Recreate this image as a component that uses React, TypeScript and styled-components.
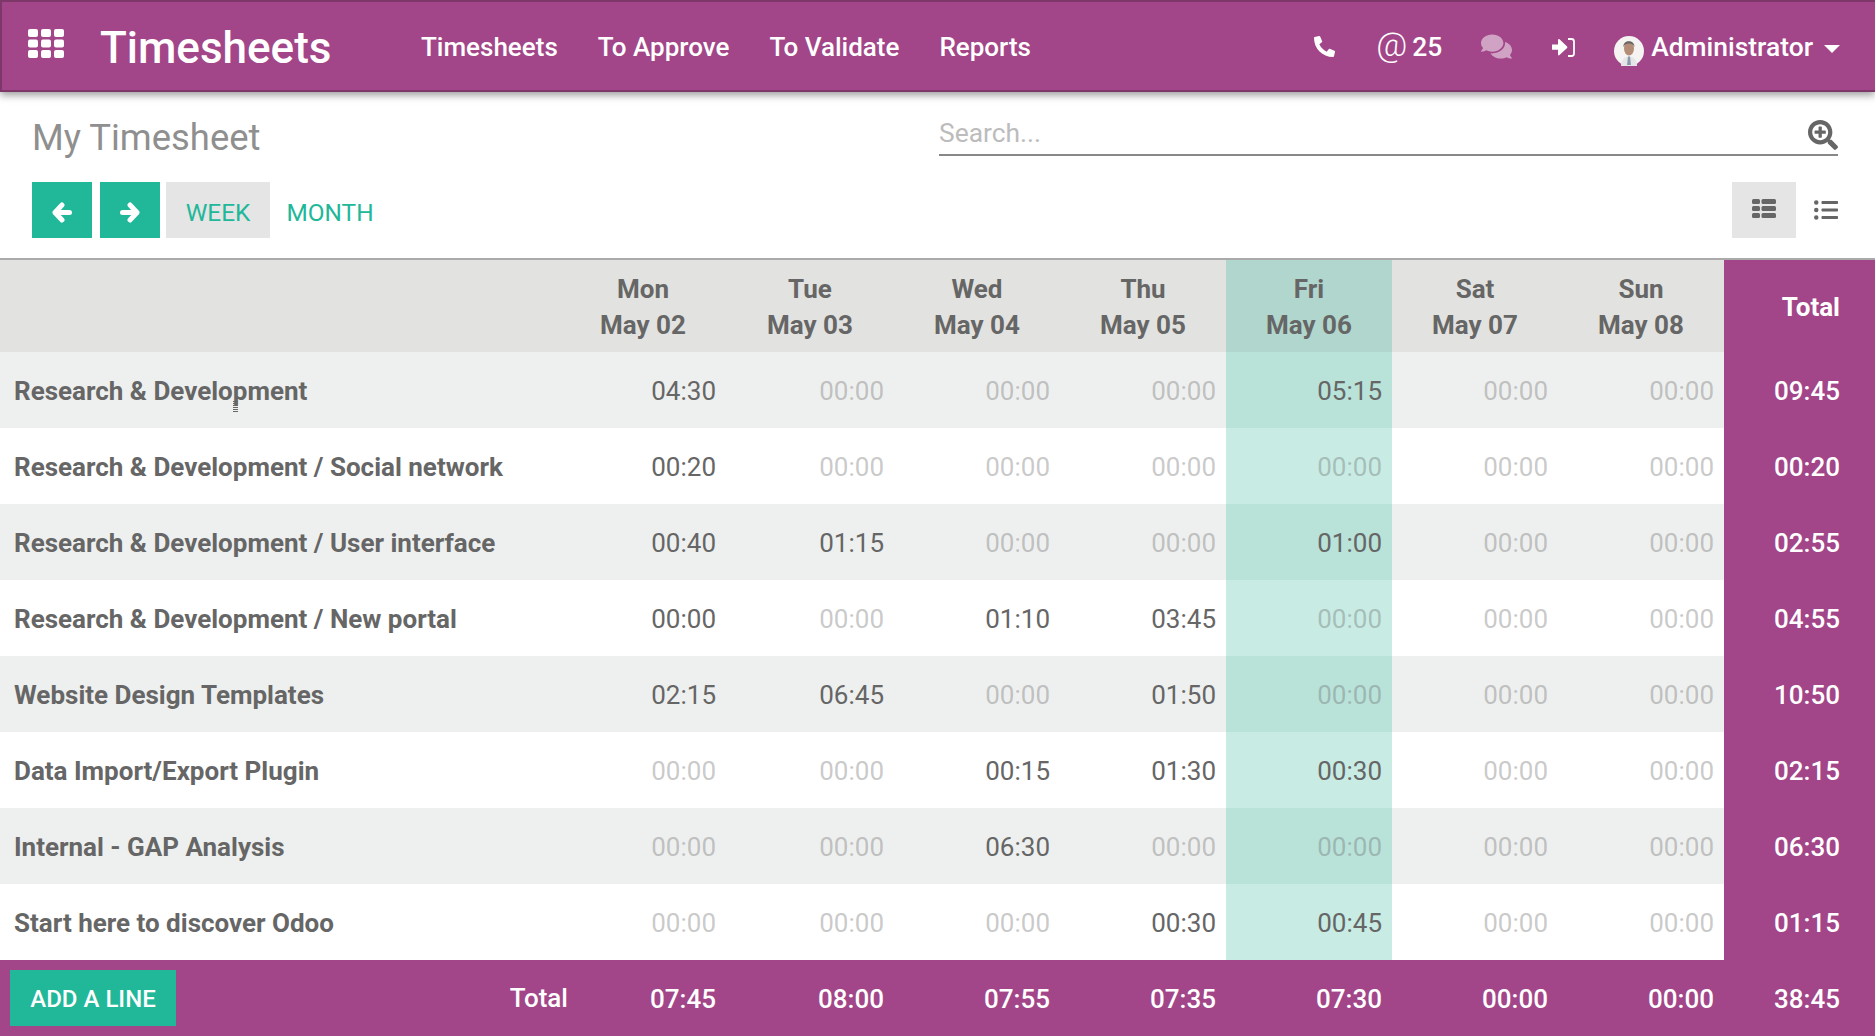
import styled, { createGlobalStyle } from 'styled-components';
import { FaComments, FaListUl, FaPhoneAlt, FaSearchPlus } from 'react-icons/fa';

const GlobalStyle = createGlobalStyle`
  html, body {
    margin: 0;
    padding: 0;
    background: #fff;
    font-family: Roboto, "Liberation Sans", sans-serif;
    overflow: hidden;
  }
`;

const Page = styled.div`
  width: 1875px;
  height: 1036px;
  display: flex;
  flex-direction: column;
  overflow: hidden;
`;

const Navbar = styled.nav`
  height: 92px;
  box-sizing: border-box;
  flex: none;
  display: flex;
  align-items: center;
  padding: 3px 35px 0 26px;
  background: #a24689;
  border: 2px solid #7e3769;
  border-right: none;
  color: #fff;
  box-shadow: 0 3px 8px rgba(0, 0, 0, 0.4);
  position: relative;
  z-index: 1;
`;

const AppsIcon = styled.svg`
  width: 36px;
  height: 29px;
  margin-bottom: 8px;
  fill: #fff;
`;

const Brand = styled.div`
  font-size: 44px;
  font-weight: 500;
  margin-left: 36px;
  width: 321px;
`;

const NavItem = styled.a`
  font-size: 26px;
  font-weight: 500;
  margin: 0 40px 2px 0;
`;

const Spacer = styled.div`
  flex: 1;
`;

const Systray = styled.div`
  display: flex;
  align-items: center;
  font-size: 26.4px;
  font-weight: 500;
  margin-bottom: 2px;
`;

const TrayItem = styled.div<{ $gap: number; $dim?: boolean }>`
  display: flex;
  align-items: center;
  margin-right: ${(p) => p.$gap}px;
  opacity: ${(p) => (p.$dim ? 0.5 : 1)};
`;

const AtSign = styled.span`
  font-size: 34px;
  line-height: 40px;
  font-weight: 300;
  margin: -5px 5px 0 0;
`;

const SignInIcon = styled.svg`
  width: 23px;
  height: 19px;
  margin-top: 2px;
`;

const Avatar = styled.svg`
  width: 30px;
  height: 30px;
  margin: 8px 7px 0 0;
`;

const Caret = styled.span`
  width: 0;
  height: 0;
  margin-left: 11px;
  margin-top: 5px;
  border-left: 8px solid transparent;
  border-right: 8px solid transparent;
  border-top: 8px solid #fff;
`;

const ControlPanel = styled.div`
  height: 166px;
  box-sizing: border-box;
  flex: none;
  padding: 0 37px 0 32px;
  display: flex;
  flex-direction: column;
`;

const PanelTop = styled.div`
  height: 90px;
  display: flex;
  justify-content: space-between;
`;

const Title = styled.h1`
  margin: 24px 0 0;
  font-size: 36.4px;
  font-weight: 400;
  color: #8f8f8f;
`;

const SearchBox = styled.div`
  width: 899px;
  height: 64px;
  box-sizing: border-box;
  border-bottom: 2px solid #888;
  display: flex;
  align-items: flex-end;
  justify-content: space-between;
  padding-bottom: 4px;
`;

const Placeholder = styled.span`
  font-size: 26.4px;
  color: #bcbcbc;
  margin-bottom: 2px;
`;

const SearchIcon = styled(FaSearchPlus)`
  width: 30px;
  height: 30px;
  color: #666;
`;

const PanelBottom = styled.div`
  display: flex;
  align-items: center;
  height: 56px;
`;

const ArrowButton = styled.button`
  width: 60px;
  height: 56px;
  border: none;
  padding: 4px 0 0;
  background: #21b799;
  display: flex;
  align-items: center;
  justify-content: center;
  & + & {
    margin-left: 8px;
  }
`;

const ArrowIcon = styled.svg`
  width: 20px;
  height: 21px;
  fill: none;
  stroke: #fff;
  stroke-width: 5;
  stroke-linecap: round;
  stroke-linejoin: round;
`;

const ModeButton = styled.button<{ $active?: boolean }>`
  width: ${(p) => (p.$active ? '104px' : '120px')};
  height: 56px;
  border: none;
  font-family: inherit;
  font-size: 24.4px;
  padding: 4px 0 0;
  color: #21b799;
  background: ${(p) => (p.$active ? '#e5e5e5' : 'transparent')};
  margin-left: ${(p) => (p.$active ? '6px' : '0')};
`;

const ViewButtons = styled.div`
  margin-left: auto;
  display: flex;
  align-items: center;
`;

const ViewButton = styled.button<{ $active?: boolean }>`
  height: 56px;
  width: ${(p) => (p.$active ? '64px' : '24px')};
  margin-left: ${(p) => (p.$active ? '0' : '18px')};
  border: none;
  padding: 0 0 ${(p) => (p.$active ? '3px' : '0')};
  color: #666;
  font-size: 24px;
  background: ${(p) => (p.$active ? '#e5e5e5' : 'transparent')};
  display: flex;
  align-items: center;
  justify-content: center;
`;

const ThListIcon = styled.svg`
  width: 24px;
  height: 19px;
  fill: #666;
`;

const Sheet = styled.table`
  width: 1875px;
  table-layout: fixed;
  border-collapse: separate;
  border-spacing: 0;
  border-top: 2px solid #aaa;
  font-size: 26px;
  color: #666;
`;

const TableCol = styled.col<{ $width: number }>`
  width: ${(p) => p.$width}px;
`;

const HeadRow = styled.tr`
  height: 92px;
  background: #e2e2e0;
`;

const HeadCell = styled.th<{ $today?: boolean }>`
  padding: 1px 0 0;
  font-weight: 700;
  line-height: 36px;
  text-align: center;
  background: ${(p) => (p.$today ? '#b0d6cd' : 'transparent')};
`;

const TotalHead = styled.th`
  padding: 1px 35px 0 0;
  text-align: right;
  font-weight: 700;
  color: #fff;
  background: #a24689;
`;

const Row = styled.tr`
  height: 76px;
  &:nth-child(odd) {
    background: #eef0ef;
  }
  &:nth-child(even) {
    background: #fff;
  }
  &:nth-child(odd) td.today {
    background: #b9e2d9;
  }
  &:nth-child(even) td.today {
    background: #c8ece4;
  }
`;

const NameCell = styled.td`
  padding: 1px 0 0 14px;
  font-weight: 700;
  white-space: nowrap;
`;

const NameText = styled.span`
  position: relative;
`;

const MouseCursor = styled.span`
  position: absolute;
  left: 219px;
  top: 25px;
  width: 5px;
  height: 12px;
  background: repeating-linear-gradient(#666 0 1px, transparent 1px 2px);
`;

const TimeCell = styled.td<{ $empty: boolean }>`
  padding: 1px 10px 0 0;
  text-align: right;
  color: ${(p) => (p.$empty ? 'rgba(102, 102, 102, 0.36)' : '#666')};
`;

const TotalCell = styled.td`
  padding: 1px 35px 0 0;
  text-align: right;
  font-weight: 500;
  color: #fff;
  background: #a24689;
`;

const FootRow = styled.tr`
  height: 76px;
  background: #a24689;
  color: #fff;
`;

const FootLabel = styled.td`
  padding: 0 0 0 10px;
`;

const FootLabelInner = styled.div`
  display: flex;
  align-items: center;
  justify-content: space-between;
  margin-right: -8px;
  font-weight: 500;
`;

const AddButton = styled.button`
  width: 166px;
  height: 56px;
  border: none;
  padding: 2px 0 0;
  background: #21b799;
  color: #fff;
  font-family: inherit;
  font-size: 24px;
  font-weight: 500;
`;

const FootCell = styled.td`
  padding: 2px 10px 0 0;
  text-align: right;
  font-weight: 500;
`;

const FootTotal = styled(FootCell)`
  padding-right: 35px;
`;

const days = [
  ['Mon', 'May 02'],
  ['Tue', 'May 03'],
  ['Wed', 'May 04'],
  ['Thu', 'May 05'],
  ['Fri', 'May 06'],
  ['Sat', 'May 07'],
  ['Sun', 'May 08'],
];

// "--" is a day without a line: it shows as a dimmed 00:00
const rows = [
  { name: 'Research & Development', hours: ['04:30', '--', '--', '--', '05:15', '--', '--'], total: '09:45' },
  { name: 'Research & Development / Social network', hours: ['00:20', '--', '--', '--', '--', '--', '--'], total: '00:20' },
  { name: 'Research & Development / User interface', hours: ['00:40', '01:15', '--', '--', '01:00', '--', '--'], total: '02:55' },
  { name: 'Research & Development / New portal', hours: ['00:00', '--', '01:10', '03:45', '--', '--', '--'], total: '04:55' },
  { name: 'Website Design Templates', hours: ['02:15', '06:45', '--', '01:50', '--', '--', '--'], total: '10:50' },
  { name: 'Data Import/Export Plugin', hours: ['--', '--', '00:15', '01:30', '00:30', '--', '--'], total: '02:15' },
  { name: 'Internal - GAP Analysis', hours: ['--', '--', '06:30', '--', '--', '--', '--'], total: '06:30' },
  { name: 'Start here to discover Odoo', hours: ['--', '--', '--', '00:30', '00:45', '--', '--'], total: '01:15' },
];

const footTotals = ['07:45', '08:00', '07:55', '07:35', '07:30', '00:00', '00:00'];

const colWidths = [560, 166, 168, 166, 166, 166, 166, 166, 151];

const TODAY = 4;

export default function App() {
  return (
    <Page>
      <GlobalStyle />
      <Navbar>
        <AppsIcon viewBox="0 0 36 29">
          {[0, 1, 2].map((r) =>
            [0, 1, 2].map((c) => (
              <rect key={`${r}-${c}`} x={c * 13} y={r * 10.5} width="10" height="8" rx="2" />
            )),
          )}
        </AppsIcon>
        <Brand>Timesheets</Brand>
        <NavItem>Timesheets</NavItem>
        <NavItem>To Approve</NavItem>
        <NavItem>To Validate</NavItem>
        <NavItem>Reports</NavItem>
        <Spacer />
        <Systray>
          <TrayItem $gap={41}>
            <FaPhoneAlt size={21} />
          </TrayItem>
          <TrayItem $gap={39}>
            <AtSign>@</AtSign>25
          </TrayItem>
          <TrayItem $gap={40} $dim>
            <FaComments size={31} />
          </TrayItem>
          <TrayItem $gap={39}>
            <SignInIcon viewBox="0 0 23 19">
              <path
                d="M0 6.5h6V1.8c0-.8.9-1.2 1.5-.6l7.6 7.2c.4.4.4 1.1 0 1.5l-7.6 7.2c-.6.6-1.5.2-1.5-.6v-4.7H0z"
                fill="#fff"
              />
              <path d="M16 1h3.5C21 1 22 2 22 3.5v12c0 1.5-1 2.5-2.5 2.5H16" fill="none" stroke="#fff" strokeWidth="1.8" />
            </SignInIcon>
          </TrayItem>
          <TrayItem $gap={0}>
            <Avatar viewBox="0 0 30 30">
              <circle cx="15" cy="15" r="15" fill="#f6f4f2" />
              <ellipse cx="15" cy="12.5" rx="5" ry="7" fill="#b48d78" />
              <path d="M9.5 11c-1-7 11-8 11 0-1-3-3-3.500-5.500-3.500S10.500 8 9.500 11z" fill="#6a6764" />
              <path d="M7 30c0-7 4-9.500 8-9.500s8 2.500 8 9.500z" fill="#e4e6e8" />
              <path d="M14 20.500h2l1 8.500h-4z" fill="#8a9cab" />
            </Avatar>
            Administrator
            <Caret />
          </TrayItem>
        </Systray>
      </Navbar>

      <ControlPanel>
        <PanelTop>
          <Title>My Timesheet</Title>
          <SearchBox>
            <Placeholder>Search...</Placeholder>
            <SearchIcon />
          </SearchBox>
        </PanelTop>
        <PanelBottom>
          <ArrowButton>
            <ArrowIcon viewBox="0 0 20 21">
              <path d="M10 3L3 10.500L10 18M3 10.500H17.500" />
            </ArrowIcon>
          </ArrowButton>
          <ArrowButton>
            <ArrowIcon viewBox="0 0 20 21">
              <path d="M10 3L17 10.500L10 18M17 10.500H2.500" />
            </ArrowIcon>
          </ArrowButton>
          <ModeButton $active>WEEK</ModeButton>
          <ModeButton>MONTH</ModeButton>
          <ViewButtons>
            <ViewButton $active>
              <ThListIcon viewBox="0 0 24 19">
                {[0, 7, 14].map((y) => (
                  <g key={y}>
                    <rect x="0" y={y} width="8" height="5" rx="1.500" />
                    <rect x="9.500" y={y} width="14.500" height="5" rx="1.500" />
                  </g>
                ))}
              </ThListIcon>
            </ViewButton>
            <ViewButton>
              <FaListUl />
            </ViewButton>
          </ViewButtons>
        </PanelBottom>
      </ControlPanel>

      <Sheet>
        <colgroup>
          {colWidths.map((w, i) => (
            <TableCol key={i} $width={w} />
          ))}
        </colgroup>
        <thead>
          <HeadRow>
            <HeadCell />
            {days.map((d, i) => (
              <HeadCell key={d[0]} $today={i === TODAY}>
                {d[0]}
                <br />
                {d[1]}
              </HeadCell>
            ))}
            <TotalHead>Total</TotalHead>
          </HeadRow>
        </thead>
        <tbody>
          {rows.map((row, r) => (
            <Row key={row.name}>
              <NameCell>
                <NameText>
                  {row.name}
                  {r === 0 && <MouseCursor />}
                </NameText>
              </NameCell>
              {row.hours.map((h, i) => (
                <TimeCell key={i} $empty={h === '--'} className={i === TODAY ? 'today' : undefined}>
                  {h === '--' ? '00:00' : h}
                </TimeCell>
              ))}
              <TotalCell>{row.total}</TotalCell>
            </Row>
          ))}
        </tbody>
        <tfoot>
          <FootRow>
            <FootLabel>
              <FootLabelInner>
                <AddButton>ADD A LINE</AddButton>
                Total
              </FootLabelInner>
            </FootLabel>
            {footTotals.map((t, i) => (
              <FootCell key={i}>{t}</FootCell>
            ))}
            <FootTotal>38:45</FootTotal>
          </FootRow>
        </tfoot>
      </Sheet>
    </Page>
  );
}
